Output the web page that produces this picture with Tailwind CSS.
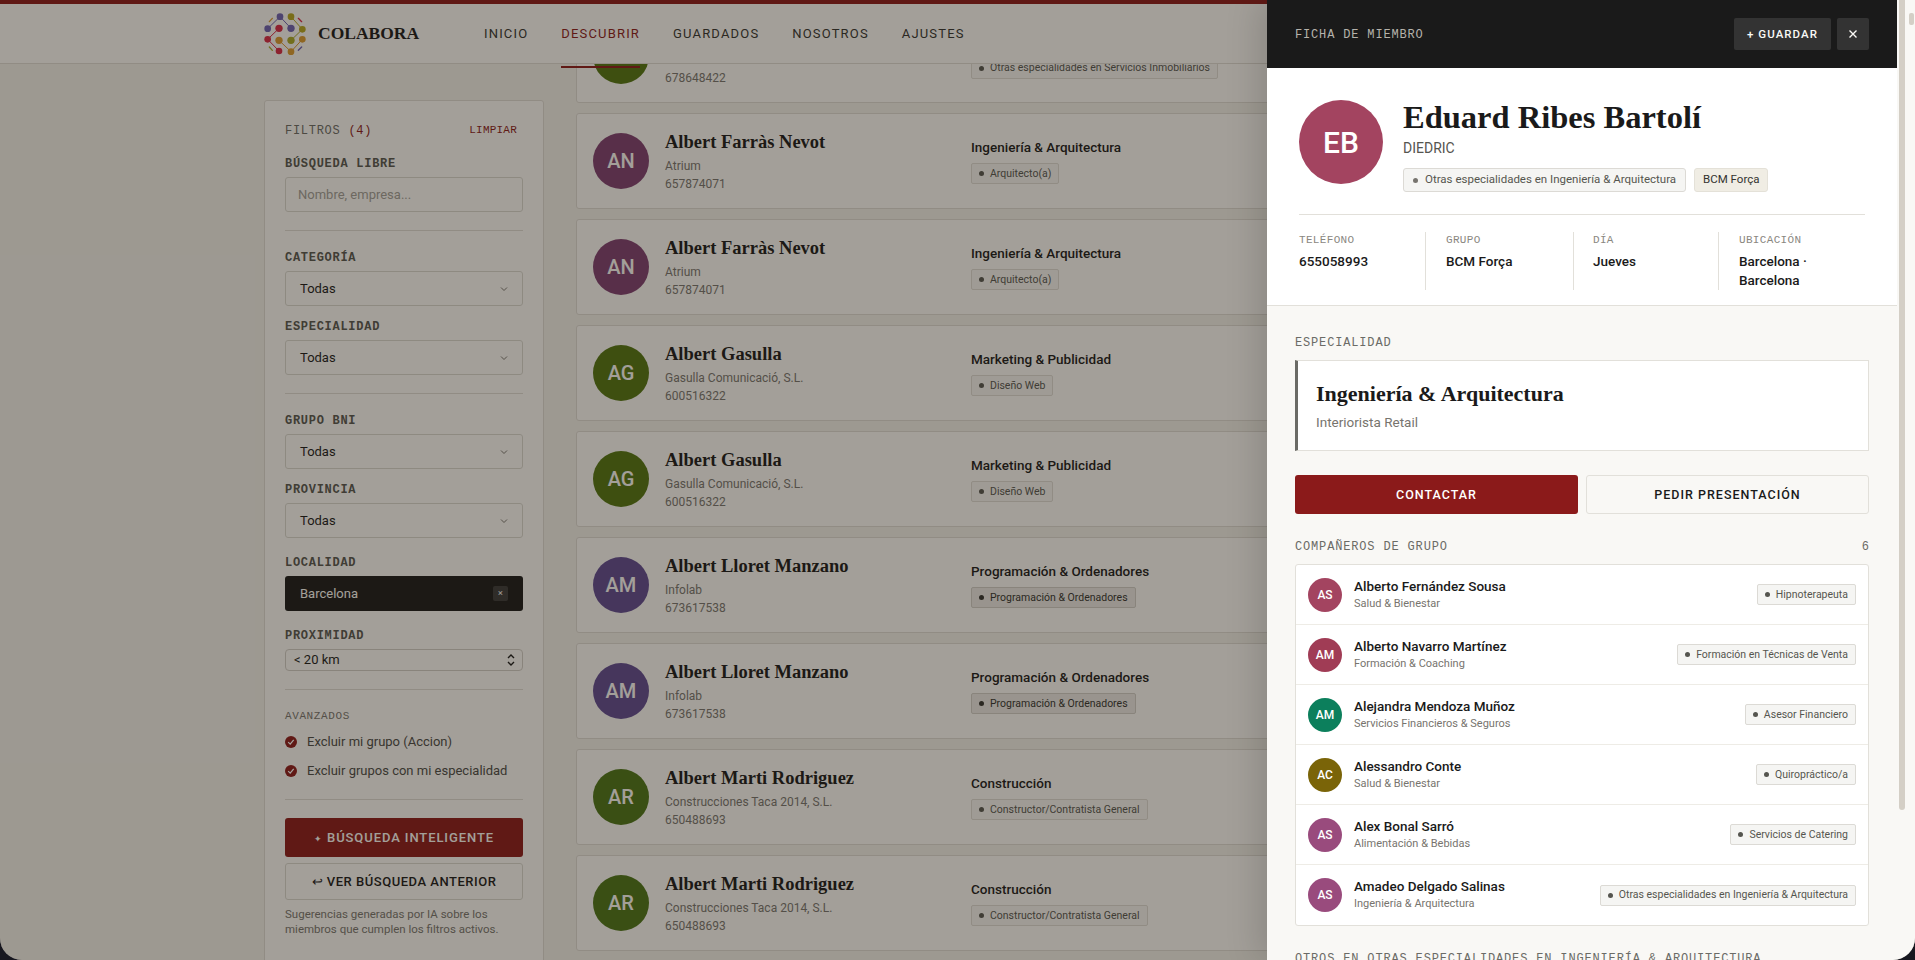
<!DOCTYPE html>
<html lang="es">
<head>
  <meta charset="UTF-8" />
  <title>Colabora - Descubrir</title>
  <script src="https://cdn.jsdelivr.net/npm/@tailwindcss/browser@4"></script>
</head>

<body class="bg-[#17171f] font-['Roboto',sans-serif] text-[#1a1a1a] overflow-hidden">
<div class="relative h-[960px] w-[1915px] overflow-hidden rounded-b-[22px] bg-[#f1eee8]">

  <!-- Top nav -->
  <header class="relative z-10 flex h-[64px] items-center border-b border-[#dcd9d2] bg-[#faf9f6] pl-[264px] pt-[4px]">
    <div class="w-[220px] flex items-center gap-[10px]">
      <svg width="44" height="44" viewBox="27 33 132 132" fill="none">
        <g stroke-width="3">
          <path d="M75 47 38 83M75 47l33 35" stroke="#6b5fb0"/>
          <path d="M108 47l34 38" stroke="#b5a520"/>
          <path d="M72 82 38 115M38 115l34 35" stroke="#d62845"/>
          <path d="M142 85 108 118" stroke="#a8a828"/>
          <path d="M142 115 108 152M72 118l36 34" stroke="#d99a30"/>
        </g>
        <circle cx="75" cy="47" r="10" fill="#6b5fb0"/>
        <circle cx="38" cy="83" r="10" fill="#6b5fb0"/>
        <circle cx="72" cy="82" r="11" fill="#d62845"/>
        <circle cx="108" cy="47" r="10" fill="#b5a520"/>
        <circle cx="108" cy="82" r="11" fill="#6b5fb0"/>
        <circle cx="142" cy="85" r="10" fill="#b5a520"/>
        <circle cx="38" cy="115" r="10" fill="#d62845"/>
        <circle cx="72" cy="118" r="11" fill="#d99a30"/>
        <circle cx="108" cy="118" r="11" fill="#a8a828"/>
        <circle cx="142" cy="115" r="10" fill="#d99a30"/>
        <circle cx="72" cy="150" r="10" fill="#d62845"/>
        <circle cx="108" cy="152" r="10" fill="#d99a30"/>
        <g stroke-width="4" stroke-linecap="round">
          <path d="M43 62l9-10" stroke="#d99a30"/>
          <path d="M130 52l10 10" stroke="#d62845"/>
          <path d="M43 138l9 10" stroke="#a8a828"/>
          <path d="M130 148l10-10" stroke="#6b5fb0"/>
        </g>
      </svg>
      <span class="font-['Liberation_Serif',serif] text-[17.5px] font-bold text-[#1a1a1a]">COLABORA</span>
    </div>
    <nav class="flex gap-[33px] text-[13px] leading-[20px] tracking-[.09em] text-[#33332f]">
      <a href="#">INICIO</a>
      <a href="#" class="relative text-[#8b1a1a]">DESCUBRIR<span class="absolute left-0 right-0 top-[42px] h-[2px] bg-[#8b1a1a]"></span></a>
      <a href="#">GUARDADOS</a>
      <a href="#">NOSOTROS</a>
      <a href="#">AJUSTES</a>
    </nav>
  </header>
  <div class="absolute inset-x-0 top-0 z-10 h-[4px] bg-[#8b1a1a]"></div>

  <!-- Page -->
  <div class="flex items-start gap-[32px] pl-[264px]">

    <!-- Filters -->
    <aside class="mt-[36px] h-[900px] w-[280px] shrink-0 rounded-[3px] border border-[#dcd9d2] bg-[#faf9f6] px-[20px] font-['Roboto',sans-serif]">
      <div class="flex h-[56px] items-start justify-between pr-[6px] pt-[21px] font-['Liberation_Mono',monospace]">
        <span class="text-[12px] tracking-[.06em] text-[#6b6b66]">FILTROS <span class="text-[#8b1a1a]">(4)</span></span>
        <button class="text-[11px] tracking-[.02em] text-[#8b1a1a]">LIMPIAR</button>
      </div>

      <label class="block h-[20px] font-['Liberation_Mono',monospace] text-[12px] font-bold leading-[14px] tracking-[.06em] text-[#55554f]">BÚSQUEDA LIBRE</label>
      <input type="text" placeholder="Nombre, empresa..." class="block h-[35px] w-full rounded-[3px] border border-[#d8d5ce] bg-[#faf9f6] px-[12px] text-[13px] placeholder:text-[#a09d96]" />
      <div class="mb-[19px] mt-[18px] border-t border-[#dcd9d2]"></div>

      <label class="block h-[21px] font-['Liberation_Mono',monospace] text-[12px] font-bold leading-[16px] tracking-[.06em] text-[#55554f]">CATEGORÍA</label>
      <div class="flex h-[35px] items-center justify-between rounded-[3px] border border-[#d8d5ce] px-[14px] text-[13px]">
        <span>Todas</span>
        <svg width="8" height="8" viewBox="0 0 8 8" fill="none" stroke="#77746e" stroke-width="1"><path d="M1 2.5l3 3 3-3"/></svg>
      </div>
      <label class="mt-[13px] block h-[21px] font-['Liberation_Mono',monospace] text-[12px] font-bold leading-[16px] tracking-[.06em] text-[#55554f]">ESPECIALIDAD</label>
      <div class="flex h-[35px] items-center justify-between rounded-[3px] border border-[#d8d5ce] px-[14px] text-[13px]">
        <span>Todas</span>
        <svg width="8" height="8" viewBox="0 0 8 8" fill="none" stroke="#77746e" stroke-width="1"><path d="M1 2.5l3 3 3-3"/></svg>
      </div>
      <div class="mb-[19px] mt-[18px] border-t border-[#dcd9d2]"></div>

      <label class="block h-[21px] font-['Liberation_Mono',monospace] text-[12px] font-bold leading-[16px] tracking-[.06em] text-[#55554f]">GRUPO BNI</label>
      <div class="flex h-[35px] items-center justify-between rounded-[3px] border border-[#d8d5ce] px-[14px] text-[13px]">
        <span>Todas</span>
        <svg width="8" height="8" viewBox="0 0 8 8" fill="none" stroke="#77746e" stroke-width="1"><path d="M1 2.5l3 3 3-3"/></svg>
      </div>
      <label class="mt-[13px] block h-[21px] font-['Liberation_Mono',monospace] text-[12px] font-bold leading-[16px] tracking-[.06em] text-[#55554f]">PROVINCIA</label>
      <div class="flex h-[35px] items-center justify-between rounded-[3px] border border-[#d8d5ce] px-[14px] text-[13px]">
        <span>Todas</span>
        <svg width="8" height="8" viewBox="0 0 8 8" fill="none" stroke="#77746e" stroke-width="1"><path d="M1 2.5l3 3 3-3"/></svg>
      </div>
      <label class="mt-[17px] block h-[21px] font-['Liberation_Mono',monospace] text-[12px] font-bold leading-[16px] tracking-[.06em] text-[#55554f]">LOCALIDAD</label>
      <div class="flex h-[35px] items-center justify-between rounded-[3px] bg-[#1a1a1a] pl-[15px] pr-[15px] text-[13px] text-[#faf9f6]">
        <span>Barcelona</span>
        <span class="flex h-[15px] w-[15px] items-center justify-center rounded-[2px] bg-[#3a3a3a] text-[9px] leading-none">×</span>
      </div>
      <label class="mt-[17px] block h-[21px] font-['Liberation_Mono',monospace] text-[12px] font-bold leading-[16px] tracking-[.06em] text-[#55554f]">PROXIMIDAD</label>
      <div class="flex h-[22px] items-center justify-between rounded-[4px] border border-[#cfccc5] pl-[8px] pr-[6px] text-[13px]">
        <span>&lt; 20 km</span>
        <svg width="10" height="14" viewBox="0 0 10 14" fill="none" stroke="#1a1a1a" stroke-width="1.4"><path d="M2 5l3-3 3 3M2 9l3 3 3-3"/></svg>
      </div>
      <div class="mb-[19px] mt-[18px] border-t border-[#dcd9d2]"></div>

      <div class="font-['Liberation_Mono',monospace] text-[11px] leading-[14px] tracking-[.055em] text-[#77746e]">AVANZADOS</div>
      <div class="mt-[10px] flex h-[18px] items-center gap-[10px] text-[13px] text-[#4a4a46]">
        <svg width="12" height="12" viewBox="0 0 12 12"><circle cx="6" cy="6" r="6" fill="#8b1a1a"/><path d="M3.2 6.2l2 2 3.5-4.4" fill="none" stroke="#fff" stroke-width="1.2"/></svg>
        Excluir mi grupo (Accion)
      </div>
      <div class="mt-[11px] flex h-[18px] items-center gap-[10px] text-[13px] text-[#4a4a46]">
        <svg width="12" height="12" viewBox="0 0 12 12"><circle cx="6" cy="6" r="6" fill="#8b1a1a"/><path d="M3.2 6.2l2 2 3.5-4.4" fill="none" stroke="#fff" stroke-width="1.2"/></svg>
        Excluir grupos con mi especialidad
      </div>
      <div class="mb-[18px] mt-[19px] border-t border-[#dcd9d2]"></div>

      <button class="block h-[39px] w-full rounded-[3px] bg-[#8b1a1a] text-[13px] font-medium tracking-[.07em] text-[#faf9f6]"><span class="text-[9px]">✦</span> BÚSQUEDA INTELIGENTE</button>
      <button class="mt-[6px] block h-[37px] w-full rounded-[3px] border border-[#d8d5ce] text-[13px] font-medium tracking-[.04em]">↩ VER BÚSQUEDA ANTERIOR</button>
      <p class="mt-[7px] text-[11.5px] leading-[15px] text-[#77746e]">Sugerencias generadas por IA sobre los<br />miembros que cumplen los filtros activos.</p>
    </aside>

    <!-- Member list -->
    <div class="-mt-[56px] flex w-[1100px] shrink-0 flex-col gap-[10px]">

      <div class="flex h-[95px] items-center rounded-[3px] border border-[#dcd9d2] bg-[#faf9f6] pl-[16px]">
        <div class="flex h-[56px] w-[56px] shrink-0 items-center justify-center rounded-full bg-[#527312] text-[20px] font-medium text-[#faf9f6]">AE</div>
        <div class="ml-[16px] w-[306px] shrink-0">
          <div class="font-['Liberation_Serif',serif] text-[18.5px] font-bold leading-[24px]">Albert</div>
          <div class="mt-[3px] text-[12px] leading-[18px] text-[#77746e]">&nbsp;</div>
          <div class="text-[12px] leading-[18px] text-[#77746e]">678648422</div>
        </div>
        <div>
          <div class="text-[13.5px] font-medium leading-[18px]">&nbsp;</div>
          <span class="mt-[7px] inline-flex h-[21px] items-center gap-[6px] rounded-[2px] border border-[#dcd9d2] bg-[#f3f2ef] px-[7px] text-[10.5px] text-[#55554f]"><i class="h-[5px] w-[5px] rounded-full bg-[#55554f]"></i>Otras especialidades en Servicios Inmobiliarios</span>
        </div>
      </div>

      <div class="flex h-[96px] items-center rounded-[3px] border border-[#dcd9d2] bg-[#faf9f6] pl-[16px]">
        <div class="flex h-[56px] w-[56px] shrink-0 items-center justify-center rounded-full bg-[#7e3f70] text-[20px] font-medium text-[#faf9f6]">AN</div>
        <div class="ml-[16px] w-[306px] shrink-0">
          <div class="font-['Liberation_Serif',serif] text-[18.5px] font-bold leading-[24px]">Albert Farràs Nevot</div>
          <div class="mt-[3px] text-[12px] leading-[18px] text-[#77746e]">Atrium</div>
          <div class="text-[12px] leading-[18px] text-[#77746e]">657874071</div>
        </div>
        <div>
          <div class="text-[13.5px] font-medium leading-[18px]">Ingeniería &amp; Arquitectura</div>
          <span class="mt-[7px] inline-flex h-[21px] items-center gap-[6px] rounded-[2px] border border-[#dcd9d2] bg-[#f3f2ef] px-[7px] text-[10.5px] text-[#55554f]"><i class="h-[5px] w-[5px] rounded-full bg-[#55554f]"></i>Arquitecto(a)</span>
        </div>
      </div>

      <div class="flex h-[96px] items-center rounded-[3px] border border-[#dcd9d2] bg-[#faf9f6] pl-[16px]">
        <div class="flex h-[56px] w-[56px] shrink-0 items-center justify-center rounded-full bg-[#7e3f70] text-[20px] font-medium text-[#faf9f6]">AN</div>
        <div class="ml-[16px] w-[306px] shrink-0">
          <div class="font-['Liberation_Serif',serif] text-[18.5px] font-bold leading-[24px]">Albert Farràs Nevot</div>
          <div class="mt-[3px] text-[12px] leading-[18px] text-[#77746e]">Atrium</div>
          <div class="text-[12px] leading-[18px] text-[#77746e]">657874071</div>
        </div>
        <div>
          <div class="text-[13.5px] font-medium leading-[18px]">Ingeniería &amp; Arquitectura</div>
          <span class="mt-[7px] inline-flex h-[21px] items-center gap-[6px] rounded-[2px] border border-[#dcd9d2] bg-[#f3f2ef] px-[7px] text-[10.5px] text-[#55554f]"><i class="h-[5px] w-[5px] rounded-full bg-[#55554f]"></i>Arquitecto(a)</span>
        </div>
      </div>

      <div class="flex h-[96px] items-center rounded-[3px] border border-[#dcd9d2] bg-[#faf9f6] pl-[16px]">
        <div class="flex h-[56px] w-[56px] shrink-0 items-center justify-center rounded-full bg-[#527312] text-[20px] font-medium text-[#faf9f6]">AG</div>
        <div class="ml-[16px] w-[306px] shrink-0">
          <div class="font-['Liberation_Serif',serif] text-[18.5px] font-bold leading-[24px]">Albert Gasulla</div>
          <div class="mt-[3px] text-[12px] leading-[18px] text-[#77746e]">Gasulla Comunicació, S.L.</div>
          <div class="text-[12px] leading-[18px] text-[#77746e]">600516322</div>
        </div>
        <div>
          <div class="text-[13.5px] font-medium leading-[18px]">Marketing &amp; Publicidad</div>
          <span class="mt-[7px] inline-flex h-[21px] items-center gap-[6px] rounded-[2px] border border-[#dcd9d2] bg-[#f3f2ef] px-[7px] text-[10.5px] text-[#55554f]"><i class="h-[5px] w-[5px] rounded-full bg-[#55554f]"></i>Diseño Web</span>
        </div>
      </div>

      <div class="flex h-[96px] items-center rounded-[3px] border border-[#dcd9d2] bg-[#faf9f6] pl-[16px]">
        <div class="flex h-[56px] w-[56px] shrink-0 items-center justify-center rounded-full bg-[#527312] text-[20px] font-medium text-[#faf9f6]">AG</div>
        <div class="ml-[16px] w-[306px] shrink-0">
          <div class="font-['Liberation_Serif',serif] text-[18.5px] font-bold leading-[24px]">Albert Gasulla</div>
          <div class="mt-[3px] text-[12px] leading-[18px] text-[#77746e]">Gasulla Comunicació, S.L.</div>
          <div class="text-[12px] leading-[18px] text-[#77746e]">600516322</div>
        </div>
        <div>
          <div class="text-[13.5px] font-medium leading-[18px]">Marketing &amp; Publicidad</div>
          <span class="mt-[7px] inline-flex h-[21px] items-center gap-[6px] rounded-[2px] border border-[#dcd9d2] bg-[#f3f2ef] px-[7px] text-[10.5px] text-[#55554f]"><i class="h-[5px] w-[5px] rounded-full bg-[#55554f]"></i>Diseño Web</span>
        </div>
      </div>

      <div class="flex h-[96px] items-center rounded-[3px] border border-[#dcd9d2] bg-[#faf9f6] pl-[16px]">
        <div class="flex h-[56px] w-[56px] shrink-0 items-center justify-center rounded-full bg-[#5f4a90] text-[20px] font-medium text-[#faf9f6]">AM</div>
        <div class="ml-[16px] w-[306px] shrink-0">
          <div class="font-['Liberation_Serif',serif] text-[18.5px] font-bold leading-[24px]">Albert Lloret Manzano</div>
          <div class="mt-[3px] text-[12px] leading-[18px] text-[#77746e]">Infolab</div>
          <div class="text-[12px] leading-[18px] text-[#77746e]">673617538</div>
        </div>
        <div>
          <div class="text-[13.5px] font-medium leading-[18px]">Programación &amp; Ordenadores</div>
          <span class="mt-[7px] inline-flex h-[21px] items-center gap-[6px] rounded-[2px] border border-[#cfccc5] bg-[#e9e7e3] px-[7px] text-[10.5px] text-[#33332f]"><i class="h-[5px] w-[5px] rounded-full bg-[#33332f]"></i>Programación &amp; Ordenadores</span>
        </div>
      </div>

      <div class="flex h-[96px] items-center rounded-[3px] border border-[#dcd9d2] bg-[#faf9f6] pl-[16px]">
        <div class="flex h-[56px] w-[56px] shrink-0 items-center justify-center rounded-full bg-[#5f4a90] text-[20px] font-medium text-[#faf9f6]">AM</div>
        <div class="ml-[16px] w-[306px] shrink-0">
          <div class="font-['Liberation_Serif',serif] text-[18.5px] font-bold leading-[24px]">Albert Lloret Manzano</div>
          <div class="mt-[3px] text-[12px] leading-[18px] text-[#77746e]">Infolab</div>
          <div class="text-[12px] leading-[18px] text-[#77746e]">673617538</div>
        </div>
        <div>
          <div class="text-[13.5px] font-medium leading-[18px]">Programación &amp; Ordenadores</div>
          <span class="mt-[7px] inline-flex h-[21px] items-center gap-[6px] rounded-[2px] border border-[#cfccc5] bg-[#e9e7e3] px-[7px] text-[10.5px] text-[#33332f]"><i class="h-[5px] w-[5px] rounded-full bg-[#33332f]"></i>Programación &amp; Ordenadores</span>
        </div>
      </div>

      <div class="flex h-[96px] items-center rounded-[3px] border border-[#dcd9d2] bg-[#faf9f6] pl-[16px]">
        <div class="flex h-[56px] w-[56px] shrink-0 items-center justify-center rounded-full bg-[#4b7318] text-[20px] font-medium text-[#faf9f6]">AR</div>
        <div class="ml-[16px] w-[306px] shrink-0">
          <div class="font-['Liberation_Serif',serif] text-[18.5px] font-bold leading-[24px]">Albert Marti Rodriguez</div>
          <div class="mt-[3px] text-[12px] leading-[18px] text-[#77746e]">Construcciones Taca 2014, S.L.</div>
          <div class="text-[12px] leading-[18px] text-[#77746e]">650488693</div>
        </div>
        <div>
          <div class="text-[13.5px] font-medium leading-[18px]">Construcción</div>
          <span class="mt-[7px] inline-flex h-[21px] items-center gap-[6px] rounded-[2px] border border-[#dcd9d2] bg-[#f3f2ef] px-[7px] text-[10.5px] text-[#55554f]"><i class="h-[5px] w-[5px] rounded-full bg-[#55554f]"></i>Constructor/Contratista General</span>
        </div>
      </div>

      <div class="flex h-[96px] items-center rounded-[3px] border border-[#dcd9d2] bg-[#faf9f6] pl-[16px]">
        <div class="flex h-[56px] w-[56px] shrink-0 items-center justify-center rounded-full bg-[#4b7318] text-[20px] font-medium text-[#faf9f6]">AR</div>
        <div class="ml-[16px] w-[306px] shrink-0">
          <div class="font-['Liberation_Serif',serif] text-[18.5px] font-bold leading-[24px]">Albert Marti Rodriguez</div>
          <div class="mt-[3px] text-[12px] leading-[18px] text-[#77746e]">Construcciones Taca 2014, S.L.</div>
          <div class="text-[12px] leading-[18px] text-[#77746e]">650488693</div>
        </div>
        <div>
          <div class="text-[13.5px] font-medium leading-[18px]">Construcción</div>
          <span class="mt-[7px] inline-flex h-[21px] items-center gap-[6px] rounded-[2px] border border-[#dcd9d2] bg-[#f3f2ef] px-[7px] text-[10.5px] text-[#55554f]"><i class="h-[5px] w-[5px] rounded-full bg-[#55554f]"></i>Constructor/Contratista General</span>
        </div>
      </div>
    </div>
  </div>

  <!-- Backdrop -->
  <div class="absolute inset-0 z-20 bg-[#201a10]/40"></div>

  <!-- Member drawer -->
  <section class="absolute bottom-0 right-0 top-0 z-30 w-[648px] overflow-hidden bg-[#f9f8f5] pr-[18px] shadow-[-8px_0_32px_rgba(0,0,0,0.15)]">
    <div class="flex h-[68px] items-center justify-between bg-[#1a1a1a] pl-[28px] pr-[28px]">
      <span class="pt-[1px] font-['Liberation_Mono',monospace] text-[12px] tracking-[.07em] text-[#b5b2ab]">FICHA DE MIEMBRO</span>
      <div class="flex gap-[6px]">
        <button class="h-[32px] w-[97px] rounded-[2px] bg-[#333333] pt-[1px] text-[11.5px] font-medium tracking-[.09em] text-[#faf9f6]">+ GUARDAR</button>
        <button class="flex h-[32px] w-[32px] items-center justify-center rounded-[2px] bg-[#333333] text-[#faf9f6]">
          <svg width="10" height="10" viewBox="0 0 10 10" fill="none" stroke="currentColor" stroke-width="1.4"><path d="M1.5 1.5l7 7M8.5 1.5l-7 7"/></svg>
        </button>
      </div>
    </div>

    <div class="h-[238px] border-b border-[#e2e0da] bg-white px-[32px] pt-[32px]">
      <div class="flex h-[115px] gap-[20px] border-b border-[#e2e0da]">
        <div class="flex h-[84px] w-[84px] shrink-0 items-center justify-center rounded-full bg-[#a34460] text-[30px] font-medium text-white">EB</div>
        <div class="min-w-0">
          <h2 class="mt-[-1px] font-['Liberation_Serif',serif] text-[32.5px] font-bold leading-[36px]">Eduard Ribes Bartolí</h2>
          <p class="mt-[3px] text-[14px] leading-[20px] text-[#55554f]">DIEDRIC</p>
          <div class="mt-[10px] flex gap-[8px]">
            <span class="inline-flex h-[24px] items-center gap-[7px] rounded-[3px] border border-[#dcdad5] bg-[#f5f5f3] px-[9px] text-[11.5px] text-[#55554f]"><i class="h-[5px] w-[5px] rounded-full bg-[#77746e]"></i>Otras especialidades en Ingeniería &amp; Arquitectura</span>
            <span class="inline-flex h-[24px] items-center rounded-[3px] border border-[#e4e1d8] bg-[#f0ede4] px-[8px] text-[11.5px] text-[#33332f]">BCM Força</span>
          </div>
        </div>
      </div>
      <div class="mt-[17px] grid h-[57px] grid-cols-[127px_148px_145px_146px]">
        <div class="border-r border-[#e2e0da]">
          <div class="mt-[1px] font-['Liberation_Mono',monospace] text-[11px] leading-[14px] tracking-[.03em] text-[#8a877f]">TELÉFONO</div>
          <div class="mt-[5px] text-[13.5px] font-medium leading-[18px]">655058993</div>
        </div>
        <div class="border-r border-[#e2e0da] pl-[20px]">
          <div class="mt-[1px] font-['Liberation_Mono',monospace] text-[11px] leading-[14px] tracking-[.03em] text-[#8a877f]">GRUPO</div>
          <div class="mt-[5px] text-[13.5px] font-medium leading-[18px]">BCM Força</div>
        </div>
        <div class="border-r border-[#e2e0da] pl-[19px]">
          <div class="mt-[1px] font-['Liberation_Mono',monospace] text-[11px] leading-[14px] tracking-[.03em] text-[#8a877f]">DÍA</div>
          <div class="mt-[5px] text-[13.5px] font-medium leading-[18px]">Jueves</div>
        </div>
        <div class="pl-[20px]">
          <div class="mt-[1px] font-['Liberation_Mono',monospace] text-[11px] leading-[14px] tracking-[.03em] text-[#8a877f]">UBICACIÓN</div>
          <div class="mt-[5px] text-[13.5px] font-medium leading-[19px]">Barcelona ·<br />Barcelona</div>
        </div>
      </div>
    </div>

    <div class="px-[28px] pt-[29px]">
      <h3 class="font-['Liberation_Mono',monospace] text-[12px] leading-[16px] tracking-[.07em] text-[#6b6b66]">ESPECIALIDAD</h3>
      <div class="mt-[9px] h-[91px] border border-l-[3px] border-[#e2e0da] border-l-[#6b6b66] bg-white pl-[18px] pt-[20px]">
        <div class="font-['Liberation_Serif',serif] text-[22px] font-bold leading-[26px]">Ingeniería &amp; Arquitectura</div>
        <div class="mt-[6px] text-[13.5px] leading-[18px] text-[#77746e]">Interiorista Retail</div>
      </div>

      <div class="mt-[24px] grid grid-cols-2 gap-[8px]">
        <button class="h-[39px] rounded-[3px] bg-[#8b1a1a] pt-[1px] text-[12.5px] font-medium tracking-[.08em] text-white">CONTACTAR</button>
        <button class="h-[39px] rounded-[3px] border border-[#e2e0da] pt-[1px] text-[12.5px] font-medium tracking-[.08em]">PEDIR PRESENTACIÓN</button>
      </div>

      <div class="mt-[25px] flex items-center justify-between font-['Liberation_Mono',monospace] text-[12px] leading-[16px] text-[#6b6b66]">
        <h3 class="tracking-[.07em]">COMPAÑEROS DE GRUPO</h3>
        <span>6</span>
      </div>

      <div class="mt-[9px] divide-y divide-[#eeece6] rounded-[3px] border border-[#e2e0da] bg-white">
        <div class="flex h-[60px] items-center gap-[12px] pl-[12px] pr-[12px]">
          <div class="flex h-[34px] w-[34px] shrink-0 items-center justify-center rounded-full bg-[#a34460] text-[12px] font-medium text-white">AS</div>
          <div class="flex-1">
            <div class="text-[13.5px] font-medium leading-[17px]">Alberto Fernández Sousa</div>
            <div class="text-[11px] leading-[17px] text-[#77746e]">Salud &amp; Bienestar</div>
          </div>
          <span class="inline-flex h-[21px] items-center gap-[6px] rounded-[2px] border border-[#dcdad5] bg-[#f5f5f3] px-[7px] text-[10.5px] text-[#55554f]"><i class="h-[5px] w-[5px] rounded-full bg-[#55554f]"></i>Hipnoterapeuta</span>
        </div>
        <div class="flex h-[60px] items-center gap-[12px] pl-[12px] pr-[12px]">
          <div class="flex h-[34px] w-[34px] shrink-0 items-center justify-center rounded-full bg-[#a03c55] text-[12px] font-medium text-white">AM</div>
          <div class="flex-1">
            <div class="text-[13.5px] font-medium leading-[17px]">Alberto Navarro Martínez</div>
            <div class="text-[11px] leading-[17px] text-[#77746e]">Formación &amp; Coaching</div>
          </div>
          <span class="inline-flex h-[21px] items-center gap-[6px] rounded-[2px] border border-[#dcdad5] bg-[#f5f5f3] px-[7px] text-[10.5px] text-[#55554f]"><i class="h-[5px] w-[5px] rounded-full bg-[#55554f]"></i>Formación en Técnicas de Venta</span>
        </div>
        <div class="flex h-[60px] items-center gap-[12px] pl-[12px] pr-[12px]">
          <div class="flex h-[34px] w-[34px] shrink-0 items-center justify-center rounded-full bg-[#0c7f5c] text-[12px] font-medium text-white">AM</div>
          <div class="flex-1">
            <div class="text-[13.5px] font-medium leading-[17px]">Alejandra Mendoza Muñoz</div>
            <div class="text-[11px] leading-[17px] text-[#77746e]">Servicios Financieros &amp; Seguros</div>
          </div>
          <span class="inline-flex h-[21px] items-center gap-[6px] rounded-[2px] border border-[#dcdad5] bg-[#f5f5f3] px-[7px] text-[10.5px] text-[#55554f]"><i class="h-[5px] w-[5px] rounded-full bg-[#55554f]"></i>Asesor Financiero</span>
        </div>
        <div class="flex h-[60px] items-center gap-[12px] pl-[12px] pr-[12px]">
          <div class="flex h-[34px] w-[34px] shrink-0 items-center justify-center rounded-full bg-[#7a6408] text-[12px] font-medium text-white">AC</div>
          <div class="flex-1">
            <div class="text-[13.5px] font-medium leading-[17px]">Alessandro Conte</div>
            <div class="text-[11px] leading-[17px] text-[#77746e]">Salud &amp; Bienestar</div>
          </div>
          <span class="inline-flex h-[21px] items-center gap-[6px] rounded-[2px] border border-[#dcdad5] bg-[#f5f5f3] px-[7px] text-[10.5px] text-[#55554f]"><i class="h-[5px] w-[5px] rounded-full bg-[#55554f]"></i>Quiropráctico/a</span>
        </div>
        <div class="flex h-[60px] items-center gap-[12px] pl-[12px] pr-[12px]">
          <div class="flex h-[34px] w-[34px] shrink-0 items-center justify-center rounded-full bg-[#994b7d] text-[12px] font-medium text-white">AS</div>
          <div class="flex-1">
            <div class="text-[13.5px] font-medium leading-[17px]">Alex Bonal Sarró</div>
            <div class="text-[11px] leading-[17px] text-[#77746e]">Alimentación &amp; Bebidas</div>
          </div>
          <span class="inline-flex h-[21px] items-center gap-[6px] rounded-[2px] border border-[#dcdad5] bg-[#f5f5f3] px-[7px] text-[10.5px] text-[#55554f]"><i class="h-[5px] w-[5px] rounded-full bg-[#55554f]"></i>Servicios de Catering</span>
        </div>
        <div class="flex h-[60px] items-center gap-[12px] pl-[12px] pr-[12px]">
          <div class="flex h-[34px] w-[34px] shrink-0 items-center justify-center rounded-full bg-[#994b7d] text-[12px] font-medium text-white">AS</div>
          <div class="flex-1">
            <div class="text-[13.5px] font-medium leading-[17px]">Amadeo Delgado Salinas</div>
            <div class="text-[11px] leading-[17px] text-[#77746e]">Ingeniería &amp; Arquitectura</div>
          </div>
          <span class="inline-flex h-[21px] items-center gap-[6px] rounded-[2px] border border-[#dcdad5] bg-[#f5f5f3] px-[7px] text-[10.5px] text-[#55554f]"><i class="h-[5px] w-[5px] rounded-full bg-[#55554f]"></i>Otras especialidades en Ingeniería &amp; Arquitectura</span>
        </div>
      </div>

      <h3 class="mt-[25px] whitespace-nowrap font-['Liberation_Mono',monospace] text-[12px] leading-[16px] tracking-[.07em] text-[#6b6b66]">OTROS EN OTRAS ESPECIALIDADES EN INGENIERÍA &amp; ARQUITECTURA</h3>
    </div>

    <!-- Scrollbar thumbs -->
    <div class="absolute right-[10px] top-0 h-[810px] w-[6px] rounded-b-[3px] bg-[#d4cfc6]"></div>
    <div class="absolute right-[1px] top-[13px] h-[12px] w-[5px] rounded-[2px] bg-[#d4cfc6]"></div>
  </section>
</div>
</body>
</html>
